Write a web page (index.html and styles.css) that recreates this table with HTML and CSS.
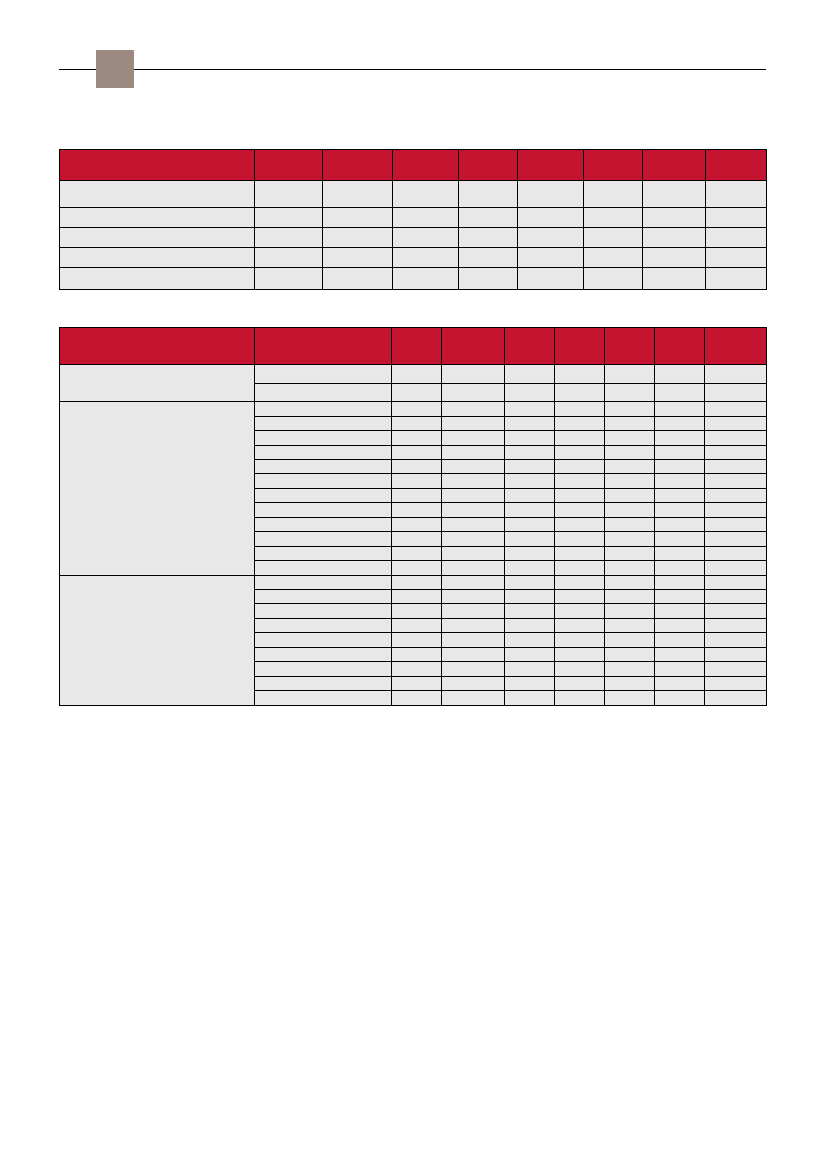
FILE: index.html
```html
<!DOCTYPE html>
<html lang="en">
<head>
<meta charset="utf-8">
<title>Tables</title>
<link rel="stylesheet" href="styles.css">
</head>
<body>
<div class="page">
  <div class="topbar">
    <div class="rule rule-left"></div>
    <div class="tab"></div>
    <div class="rule rule-right"></div>
  </div>

  <div class="grid t1">
    <div class="h"></div><div class="h"></div><div class="h"></div><div class="h"></div><div class="h"></div><div class="h"></div><div class="h"></div><div class="h"></div><div class="h"></div>
    <div class="c"></div><div class="c"></div><div class="c"></div><div class="c"></div><div class="c"></div><div class="c"></div><div class="c"></div><div class="c"></div><div class="c"></div>
    <div class="c"></div><div class="c"></div><div class="c"></div><div class="c"></div><div class="c"></div><div class="c"></div><div class="c"></div><div class="c"></div><div class="c"></div>
    <div class="c"></div><div class="c"></div><div class="c"></div><div class="c"></div><div class="c"></div><div class="c"></div><div class="c"></div><div class="c"></div><div class="c"></div>
    <div class="c"></div><div class="c"></div><div class="c"></div><div class="c"></div><div class="c"></div><div class="c"></div><div class="c"></div><div class="c"></div><div class="c"></div>
    <div class="c"></div><div class="c"></div><div class="c"></div><div class="c"></div><div class="c"></div><div class="c"></div><div class="c"></div><div class="c"></div><div class="c"></div>
  </div>

  <div class="grid t2">
    <div class="h"></div><div class="h"></div><div class="h"></div><div class="h"></div><div class="h"></div><div class="h"></div><div class="h"></div><div class="h"></div><div class="h"></div>

    <div class="c span2"></div>
    <div class="c"></div><div class="c"></div><div class="c"></div><div class="c"></div><div class="c"></div><div class="c"></div><div class="c"></div><div class="c"></div>
    <div class="c"></div><div class="c"></div><div class="c"></div><div class="c"></div><div class="c"></div><div class="c"></div><div class="c"></div><div class="c"></div>

    <div class="c span12"></div>
    <div class="c"></div><div class="c"></div><div class="c"></div><div class="c"></div><div class="c"></div><div class="c"></div><div class="c"></div><div class="c"></div>
    <div class="c"></div><div class="c"></div><div class="c"></div><div class="c"></div><div class="c"></div><div class="c"></div><div class="c"></div><div class="c"></div>
    <div class="c"></div><div class="c"></div><div class="c"></div><div class="c"></div><div class="c"></div><div class="c"></div><div class="c"></div><div class="c"></div>
    <div class="c"></div><div class="c"></div><div class="c"></div><div class="c"></div><div class="c"></div><div class="c"></div><div class="c"></div><div class="c"></div>
    <div class="c"></div><div class="c"></div><div class="c"></div><div class="c"></div><div class="c"></div><div class="c"></div><div class="c"></div><div class="c"></div>
    <div class="c"></div><div class="c"></div><div class="c"></div><div class="c"></div><div class="c"></div><div class="c"></div><div class="c"></div><div class="c"></div>
    <div class="c"></div><div class="c"></div><div class="c"></div><div class="c"></div><div class="c"></div><div class="c"></div><div class="c"></div><div class="c"></div>
    <div class="c"></div><div class="c"></div><div class="c"></div><div class="c"></div><div class="c"></div><div class="c"></div><div class="c"></div><div class="c"></div>
    <div class="c"></div><div class="c"></div><div class="c"></div><div class="c"></div><div class="c"></div><div class="c"></div><div class="c"></div><div class="c"></div>
    <div class="c"></div><div class="c"></div><div class="c"></div><div class="c"></div><div class="c"></div><div class="c"></div><div class="c"></div><div class="c"></div>
    <div class="c"></div><div class="c"></div><div class="c"></div><div class="c"></div><div class="c"></div><div class="c"></div><div class="c"></div><div class="c"></div>
    <div class="c"></div><div class="c"></div><div class="c"></div><div class="c"></div><div class="c"></div><div class="c"></div><div class="c"></div><div class="c"></div>

    <div class="c span9"></div>
    <div class="c"></div><div class="c"></div><div class="c"></div><div class="c"></div><div class="c"></div><div class="c"></div><div class="c"></div><div class="c"></div>
    <div class="c"></div><div class="c"></div><div class="c"></div><div class="c"></div><div class="c"></div><div class="c"></div><div class="c"></div><div class="c"></div>
    <div class="c"></div><div class="c"></div><div class="c"></div><div class="c"></div><div class="c"></div><div class="c"></div><div class="c"></div><div class="c"></div>
    <div class="c"></div><div class="c"></div><div class="c"></div><div class="c"></div><div class="c"></div><div class="c"></div><div class="c"></div><div class="c"></div>
    <div class="c"></div><div class="c"></div><div class="c"></div><div class="c"></div><div class="c"></div><div class="c"></div><div class="c"></div><div class="c"></div>
    <div class="c"></div><div class="c"></div><div class="c"></div><div class="c"></div><div class="c"></div><div class="c"></div><div class="c"></div><div class="c"></div>
    <div class="c"></div><div class="c"></div><div class="c"></div><div class="c"></div><div class="c"></div><div class="c"></div><div class="c"></div><div class="c"></div>
    <div class="c"></div><div class="c"></div><div class="c"></div><div class="c"></div><div class="c"></div><div class="c"></div><div class="c"></div><div class="c"></div>
    <div class="c"></div><div class="c"></div><div class="c"></div><div class="c"></div><div class="c"></div><div class="c"></div><div class="c"></div><div class="c"></div>
  </div>
</div>
</body>
</html>
```

FILE: styles.css
```css
html, body {
  margin: 0;
  padding: 0;
  background: #ffffff;
  font-family: "Liberation Sans", Arial, sans-serif;
}

.page {
  width: 827px;
  min-height: 1169px;
  box-sizing: border-box;
  padding: 50px 61px 0 59px;
}

.topbar {
  display: flex;
  align-items: center;
  height: 38px;
}

.rule {
  height: 1px;
  background: #000000;
}

.rule-left {
  width: 37px;
}

.rule-right {
  flex: 1;
}

.tab {
  width: 38px;
  height: 38px;
  background: #9c8980;
}

.grid {
  display: grid;
  gap: 1px;
  background: #000000;
  border: 1px solid #000000;
  width: 706px;
}

.t1 {
  margin-top: 61px;
  grid-template-columns: 194px 67px 69px 65px 58px 65px 58px 62px 60px;
  grid-template-rows: 30px 26px 19px 19px 19px 21px;
}

.t2 {
  margin-top: 37px;
  grid-template-columns: 194px 136px 49px 62px 49px 49px 49px 49px 61px;
  grid-template-rows:
    36px
    18px 17px
    14px 13px 14px 13px 13px 14px 13px 14px 13px 14px 13px 14px
    13px 13px 14px 13px 14px 13px 14px 13px 14px;
}

.h {
  background: #c51430;
}

.c {
  background: #e8e8e8;
}

.span2 {
  grid-row: span 2;
}

.span12 {
  grid-row: span 12;
}

.span9 {
  grid-row: span 9;
}
```
